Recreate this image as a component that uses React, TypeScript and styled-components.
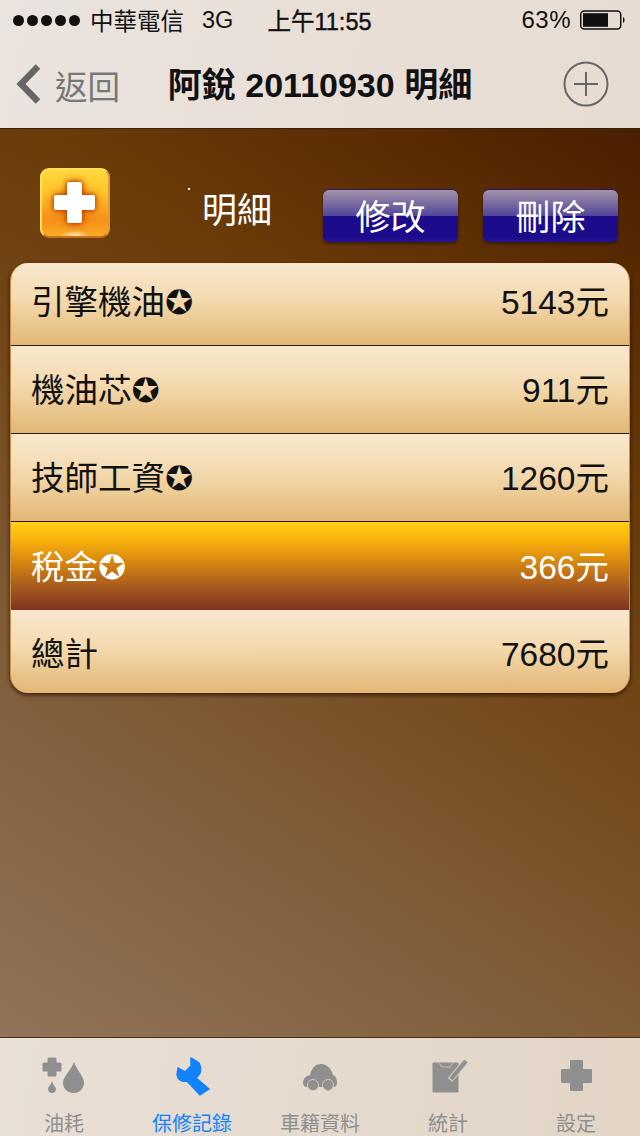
import React from "react";
import styled, { createGlobalStyle } from "styled-components";

const Global = createGlobalStyle`
  html, body { margin: 0; padding: 0; }
  body { font-family: "Liberation Sans", "Noto Sans CJK TC", "DejaVu Sans", sans-serif; }
`;

const Screen = styled.div`
  width: 640px; height: 1136px; display: flex; flex-direction: column; overflow: hidden;
`;
const Header = styled.header`
  height: 129px; flex: none; display: flex; flex-direction: column;
  background: linear-gradient(100deg, #eae3de, #e8ded6 60%, #e6dcd2);
  border-bottom: 1px solid #3c1c00; box-sizing: border-box; color: #111;
`;
const StatusBar = styled.div`
  height: 42px; display: grid; grid-template-columns: 1fr auto 1fr; align-items: center; font-size: 23.5px; padding: 0 14px 2px 13px; box-sizing: border-box;
`;
const Left = styled.div`display: flex; align-items: center;`;
const Right = styled.div`display: flex; align-items: center; justify-content: flex-end;`;
const Dots = styled.div`display: flex; gap: 3px; margin-right: 10px;`;
const Dot = styled.i`width: 11px; height: 11px; border-radius: 50%; background: #111; display: block;`;
const Net = styled.span`margin-left: 18px;`;
const Clock = styled.span`-webkit-text-stroke: 0.4px #111;`;
const Pct = styled.span`margin-right: 9px; font-size: 24px; letter-spacing: 0.5px;`;

const NavBar = styled.div`
  flex: 1; display: grid; grid-template-columns: 1fr auto 1fr; align-items: center; padding: 0 31px 2px;
`;
const Back = styled.div`display: flex; align-items: center; gap: 14px; margin-left: -15px; color: #777; font-size: 32.5px;`;
const Title = styled.h1`margin: 0; padding-bottom: 3px; font-size: 34px; font-weight: 700; color: #111; white-space: nowrap;`;
const Action = styled.div`display: flex; justify-content: flex-end;`;

const Main = styled.main`
  flex: 1; position: relative; padding: 0 10px;
  background: linear-gradient(33deg, #917459 0%, #7f5b36 32%, #74481b 52%, #6a3a08 72%, #4a1f00 100%);
`;
const Toolbar = styled.div`
  height: 134px; display: flex; align-items: flex-start; padding-left: 30px;
`;
const FirstAid = styled.div`
  width: 70px; height: 70px; margin-top: 39px; flex: none; border-radius: 9px; box-sizing: border-box;
  border: 2px solid #ffe15a; border-bottom-color: #c8701c; border-right-color: #e09a30;
  background: radial-gradient(ellipse 14px 6px at 50% 100%, #fff0c0 0, rgba(255,220,120,0) 100%), linear-gradient(#ffd83e, #ffc528 35%, #f78f18 75%, #fbaa28);
  display: flex; align-items: center; justify-content: center;
`;
const Cross = styled.svg.attrs({ width: 46, height: 46, viewBox: "0 0 46 46" })`
  filter: drop-shadow(0 0 2px #b03800) drop-shadow(0 0 4px #d05000);
`;
const ToolTitle = styled.div`
  margin-left: 92px; margin-top: 60px; width: 121px; flex: none; color: #fff; font-size: 35px; line-height: 44px;
`;
const GlossButton = styled.button`
  width: 135px; height: 52px; margin-top: 61px; flex: none; padding: 4px 0 0; border: 0; border-radius: 6px; color: #fff;
  font: inherit; font-size: 35px; line-height: 48px; text-align: center;
  background: linear-gradient(#a493ac 0, #7a6ba0 25%, #51479a 49%, #1c0c8c 50%, #1c0c8c 90%, #241490 100%);
  box-shadow: 0 2px 3px rgba(30,10,0,.5), 0 -1px 0 #2a1660;
  & + & { margin-left: 25px; }
`;
const Dust = styled.i`
  position: absolute; left: 188px; top: 59px; width: 2px; height: 2px; background: #fff; display: block;
`;

const Table = styled.section`
  border-radius: 18px; overflow: hidden; box-shadow: 0 2px 4px rgba(30,10,0,.75);
  border-left: 1px solid #c89248; border-right: 1px solid #c89248; width: 620px; box-sizing: border-box;
`;
const Row = styled.div<{ $h: number; $pb: number; $on?: boolean; $line?: boolean }>`
  height: ${p => p.$h}px; box-sizing: border-box; display: flex; align-items: center; justify-content: space-between;
  padding: 0 20px ${p => p.$pb}px 20px; font-size: 33.5px; white-space: nowrap;
  color: ${p => (p.$on ? "#fff" : "#111")};
  border-bottom: ${p => (p.$line ? "1px solid #2c1600" : "none")};
  background: ${p => p.$on
    ? "linear-gradient(#ffd012 0, #fdb50c 18%, #d07f12 50%, #a05420 78%, #803421 100%)"
    : "linear-gradient(#f9e8cf 0, #f3d9ae 45%, #e2b774 100%)"};
`;

const TabBar = styled.nav`
  height: 99px; flex: none; display: grid; grid-template-columns: repeat(5, 128px);
  background: linear-gradient(100deg, #e8dfd6, #e2d5c6); border-top: 1px solid #4a2c10; box-sizing: border-box;
`;
const Tab = styled.div<{ $on?: boolean }>`
  display: flex; flex-direction: column; align-items: center; padding-top: 18px; font-size: 20px; line-height: 24px;
  color: ${p => (p.$on ? "#1283fb" : "#8f8f8f")};
  svg { display: block; margin-bottom: 8px; }
`;
const TabIcon = styled.svg.attrs({ width: 64, height: 48, viewBox: "0 0 64 48" })`
  filter: blur(0.6px);
`;

const rows = [
  { name: "引擎機油✪", value: "5143元", h: 83, pb: 10, line: true },
  { name: "機油芯✪", value: "911元", h: 88, pb: 4, line: true },
  { name: "技師工資✪", value: "1260元", h: 88, pb: 4, line: true },
  { name: "稅金✪", value: "366元", h: 88, pb: 4, on: true },
  { name: "總計", value: "7680元", h: 83, pb: 0 },
];

export default function App() {
  return (
    <Screen>
      <Global />
      <Header>
        <StatusBar>
          <Left>
            <Dots>{[0, 1, 2, 3, 4].map(i => <Dot key={i} />)}</Dots>
            <span>中華電信</span>
            <Net>3G</Net>
          </Left>
          <Clock>上午11:55</Clock>
          <Right>
            <Pct>63%</Pct>
            <svg width="46" height="20" viewBox="0 0 46 20">
              <rect x="0.75" y="1" width="40" height="18" rx="3.5" fill="none" stroke="#111" strokeWidth="1.5" />
              <rect x="3" y="3.2" width="25" height="13.6" fill="#111" />
              <path d="M43 7 C45 7.5 45 12.5 43 13 Z" fill="#111" />
            </svg>
          </Right>
        </StatusBar>
        <NavBar>
          <Back>
            <svg width="25" height="40" viewBox="0 0 25 40">
              <path d="M22 2.5 L5 20 L22 37.5" fill="none" stroke="#666" strokeWidth="6.5" />
            </svg>
            <span>返回</span>
          </Back>
          <Title>阿銳 20110930 明細</Title>
          <Action>
            <svg width="46" height="46" viewBox="0 0 46 46">
              <circle cx="23" cy="23" r="21.5" fill="none" stroke="#666" strokeWidth="2" />
              <path d="M23 11 V35 M11 23 H35" stroke="#666" strokeWidth="2" />
            </svg>
          </Action>
        </NavBar>
      </Header>
      <Main>
        <Dust />
        <Toolbar>
          <FirstAid>
            <Cross>
              <path d="M15 4 Q15 2 17 2 H28 Q30 2 30 4 V15 H41 Q43 15 43 17 V28 Q43 30 41 30 H30 V41 Q30 43 28 43 H17 Q15 43 15 41 V30 H4 Q2 30 2 28 V17 Q2 15 4 15 H15 Z" fill="#fff" />
            </Cross>
          </FirstAid>
          <ToolTitle>明細</ToolTitle>
          <GlossButton>修改</GlossButton>
          <GlossButton>刪除</GlossButton>
        </Toolbar>
        <Table>
          {rows.map(r => (
            <Row key={r.name} $h={r.h} $pb={r.pb} $on={r.on} $line={r.line}>
              <span>{r.name}</span>
              <span>{r.value}</span>
            </Row>
          ))}
        </Table>
      </Main>
      <TabBar>
        <Tab>
          <TabIcon>
            <path d="M17 3 h6 v5 h5 v6 h-5 v5 h-6 v-5 h-5 v-6 h5 Z" fill="#8f8f8f" strokeLinejoin="round" stroke="#8f8f8f" strokeWidth="3" />
            <path d="M42 6 C45 15 52 20 52 27 C52 33 47 37 41.5 37 C36 37 31 33 31 27 C31 20 39 15 42 6 Z" fill="#8f8f8f" />
            <path d="M20 25 C21 29 24 31 24 33 C24 35.5 22 37 20 37 C18 37 16 35.5 16 33 C16 31 19 29 20 25 Z" fill="#8f8f8f" />
          </TabIcon>
          油耗
        </Tab>
        <Tab $on>
          <TabIcon>
            <path d="M31 2 L39 7 C42 13 41 18 36 22 L49 33 L40 39 L27 25 C22 26 18 24 17 19 L18 12 L25 16 L31 10 Z" fill="#1283fb" stroke="#1283fb" strokeLinejoin="round" strokeWidth="1.5" />
          </TabIcon>
          保修記錄
        </Tab>
        <Tab>
          <TabIcon>
            <path d="M15 26 C16 21 19 20 22 19 C24 11 28 8 33 8 C39 8 43 12 45 19 C48 20 49 23 49 27 C49 30 47 31 45 31 H19 C16 31 15 29 15 26 Z" fill="#8f8f8f" />
            <circle cx="25" cy="29" r="5.5" fill="#8f8f8f" stroke="#cfc6bc" strokeWidth="1" />
            <circle cx="40" cy="29" r="5.5" fill="#8f8f8f" stroke="#cfc6bc" strokeWidth="1" />
          </TabIcon>
          車籍資料
        </Tab>
        <Tab>
          <TabIcon>
            <path d="M17 7 H42 V36 H17 Z" fill="#8f8f8f" stroke="#8f8f8f" strokeLinejoin="round" strokeWidth="1" />
            <path d="M23 7 L26 11 H34 L37 7" fill="none" stroke="#b5aea6" strokeWidth="1.5" />
            <path d="M34 24 L49 6" stroke="#cfc6bc" strokeWidth="6" />
            <path d="M35 23 L50 5" stroke="#8f8f8f" strokeWidth="4" />
          </TabIcon>
          統計
        </Tab>
        <Tab>
          <TabIcon>
            <path d="M26 5 Q26 4 27 4 H38 Q39 4 39 5 V13 H47 Q48 13 48 14 V26 Q48 27 47 27 H39 V34 Q39 35 38 35 H27 Q26 35 26 34 V27 H18 Q17 27 17 26 V14 Q17 13 18 13 H26 Z" fill="#8f8f8f" />
          </TabIcon>
          設定
        </Tab>
      </TabBar>
    </Screen>
  );
}
